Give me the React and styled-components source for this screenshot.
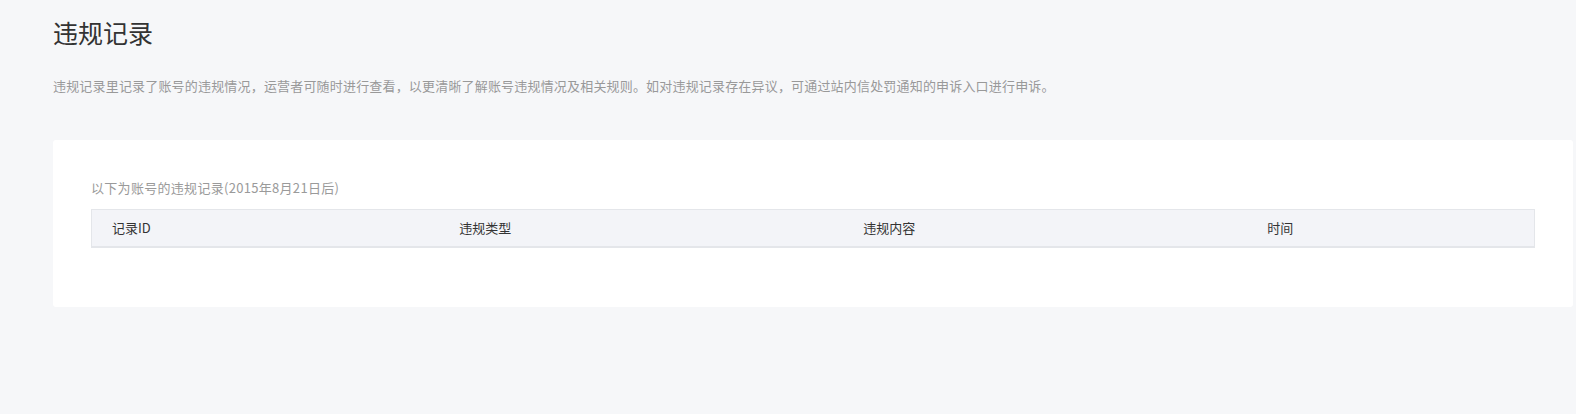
import React from "react";
import styled, { createGlobalStyle } from "styled-components";

const Global = createGlobalStyle`
  html, body { margin: 0; padding: 0; background: #f6f7f9; }
  body { font-family: "Noto Sans CJK SC", "Noto Sans", sans-serif; }
`;

const Page = styled.div`
  padding: 16px 3px 40px 53px;
`;

const Title = styled.h1`
  margin: 0;
  font-size: 25px;
  line-height: 32px;
  font-weight: 400;
  color: #333;
`;

const Desc = styled.p`
  margin: 28px 0 0;
  font-size: 13px;
  line-height: 20px;
  letter-spacing: 0.18px;
  color: #999;
`;

const Card = styled.section`
  margin-top: 44px;
  background: #fff;
  border-radius: 3px;
  padding: 38px 38px 59px;
`;

const Caption = styled.div`
  font-size: 13px;
  line-height: 20px;
  letter-spacing: 0.3px;
  color: #9a9a9a;
  margin-bottom: 11px;
`;

const Table = styled.table`
  width: 100%;
  border-collapse: collapse;
  table-layout: fixed;
  border: 1px solid #e4e6ea;
  border-bottom-width: 2px;
`;

const Th = styled.th`
  box-sizing: border-box;
  width: ${(p) => p.$w};
  background: #f3f4f8;
  height: 37px;
  padding: 0 0 0 20px;
  text-align: left;
  font-weight: 400;
  font-size: 13px;
  color: #333;
`;

const cols = [
  ["记录ID", "24.1%"],
  ["违规类型", "28%"],
  ["违规内容", "28%"],
  ["时间", "19.9%"],
];

export default function App() {
  return (
    <>
      <Global />
      <Page>
        <Title>违规记录</Title>
        <Desc>
          违规记录里记录了账号的违规情况，运营者可随时进行查看，以更清晰了解账号违规情况及相关规则。如对违规记录存在异议，可通过站内信处罚通知的申诉入口进行申诉。
        </Desc>
        <Card>
          <Caption>以下为账号的违规记录(2015年8月21日后)</Caption>
          <Table>
            <thead>
              <tr>
                {cols.map(([t, w]) => (
                  <Th key={t} $w={w}>
                    {t}
                  </Th>
                ))}
              </tr>
            </thead>
          </Table>
        </Card>
      </Page>
    </>
  );
}
